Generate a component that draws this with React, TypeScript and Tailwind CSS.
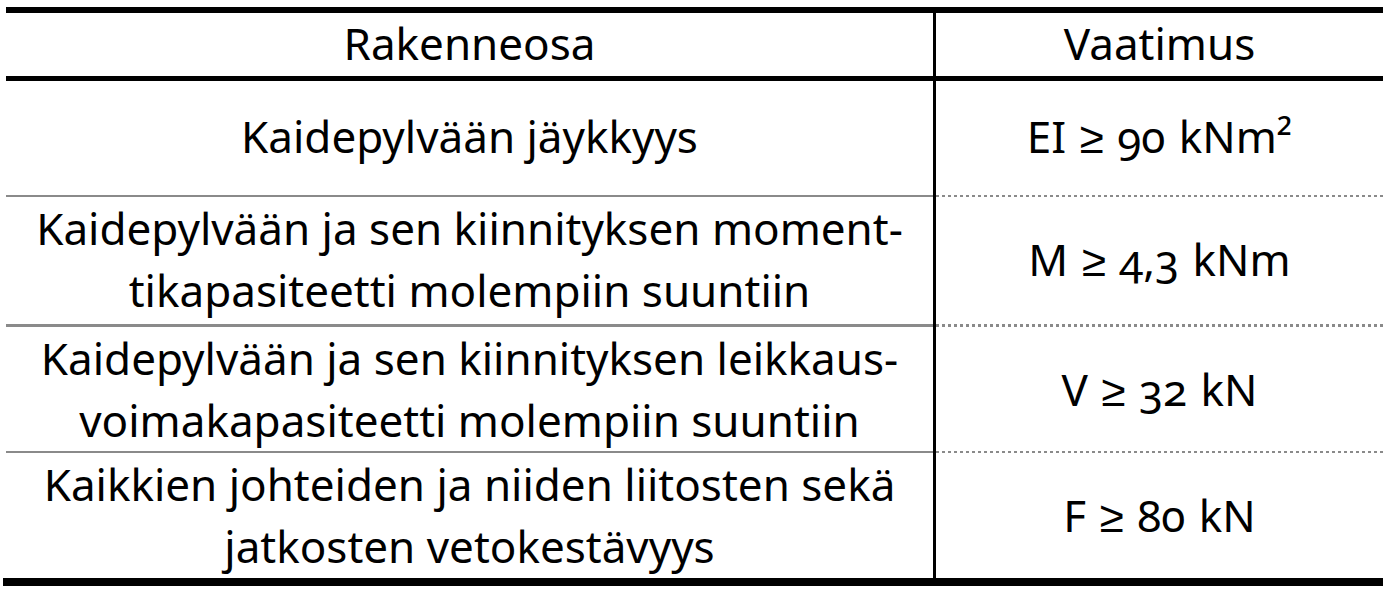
const ROWS: { left: string[]; right: string; h: string; sep: string }[] = [
  {
    left: ["Kaidepylvään jäykkyys"],
    right: "EI ≥ 90 kNm²",
    h: "h-[114px]",
    sep: "h-[2px]",
  },
  {
    left: ["Kaidepylvään ja sen kiinnityksen moment-", "tikapasiteetti molempiin suuntiin"],
    right: "M ≥ 4,3 kNm",
    h: "h-[127px]",
    sep: "h-[3px]",
  },
  {
    left: ["Kaidepylvään ja sen kiinnityksen leikkaus-", "voimakapasiteetti molempiin suuntiin"],
    right: "V ≥ 32 kN",
    h: "h-[124px]",
    sep: "h-[2px]",
  },
  {
    left: ["Kaikkien johteiden ja niiden liitosten sekä", "jatkosten vetokestävyys"],
    right: "F ≥ 80 kN",
    h: "h-[125px]",
    sep: "",
  },
];

export default function App() {
  return (
    <div className="w-[1389px] h-[595px] bg-white pt-[7px] font-['Noto_Sans',sans-serif] text-black [font-variant-numeric:oldstyle-nums]">
      <div className="ml-[6px] w-[1377px]">
        <div className="h-[6px] bg-black" />
        <div className="grid grid-cols-[927px_3px_1fr] h-[63px] text-[44px] leading-none">
          <div className="flex items-center justify-center pb-[3px]">Rakenneosa</div>
          <div className="bg-black" />
          <div className="flex items-center justify-center pb-[3px]">Vaatimus</div>
        </div>
        <div className="h-[5px] bg-black" />
        {ROWS.map((r, i) => (
          <div key={i}>
            <div className={`grid grid-cols-[927px_3px_1fr] ${r.h} text-[44px]`}>
              <div className="flex flex-col items-center justify-center pb-[4px] leading-[62px]">
                {r.left.map((l) => (
                  <div key={l}>{l}</div>
                ))}
              </div>
              <div className="bg-black" />
              <div className="flex items-center justify-center pb-[5px] [word-spacing:2px]">
                {r.right}
              </div>
            </div>
            {r.sep && (
              <div className={`grid grid-cols-[927px_3px_1fr] ${r.sep}`}>
                <div className="bg-[#8a8a8a]" />
                <div className="bg-black" />
                <div className="bg-[repeating-linear-gradient(90deg,#8a8a8a_0_3px,transparent_3px_6px)]" />
              </div>
            )}
          </div>
        ))}
      </div>
      <div className="ml-[3px] w-[1380px] h-[8px] bg-black" />
    </div>
  );
}
